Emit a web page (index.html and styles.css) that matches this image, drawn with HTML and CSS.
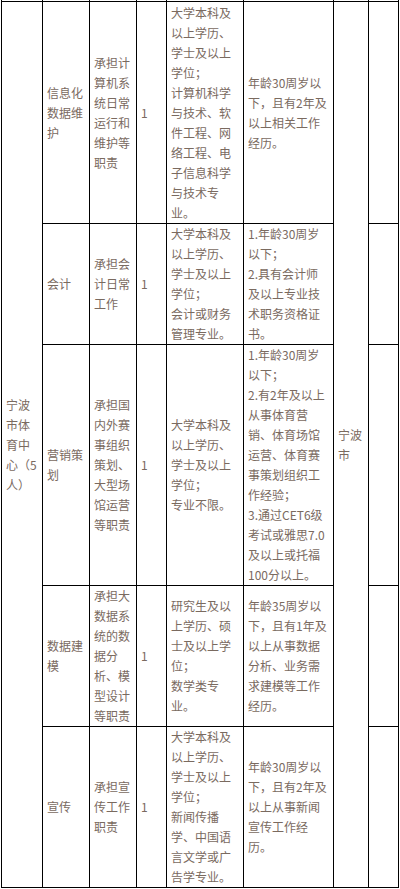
FILE: index.html
```html
<!DOCTYPE html>
<html lang="zh-CN">
<head>
<meta charset="utf-8">
<title>岗位表</title>
<link rel="stylesheet" href="styles.css">
</head>
<body>
<div class="table">
  <div class="cell stub"></div><div class="cell stub"></div><div class="cell stub"></div><div class="cell stub"></div>
  <div class="cell stub"></div><div class="cell stub"></div><div class="cell stub"></div><div class="cell stub"></div>

  <div class="cell unit"><p>宁波市体育中心（5人）</p></div>
  <div class="cell"><p>信息化数据维护</p></div>
  <div class="cell"><p>承担计算机系统日常运行和维护等职责</p></div>
  <div class="cell"><p>1</p></div>
  <div class="cell"><p>大学本科及以上学历、学士及以上学位；<br>计算机科学与技术、软件工程、网络工程、电子信息科学与技术专业。</p></div>
  <div class="cell"><p>年龄30周岁以下，且有2年及以上相关工作经历。</p></div>
  <div class="cell place"><p>宁波市</p></div>
  <div class="cell"></div>

  <div class="cell"><p>会计</p></div>
  <div class="cell"><p>承担会计日常工作</p></div>
  <div class="cell"><p>1</p></div>
  <div class="cell"><p>大学本科及以上学历、学士及以上学位；<br>会计或财务管理专业。</p></div>
  <div class="cell"><p>1.年龄30周岁以下；<br>2.具有会计师及以上专业技术职务资格证书。</p></div>
  <div class="cell"></div>

  <div class="cell"><p>营销策划</p></div>
  <div class="cell"><p>承担国内外赛事组织策划、大型场馆运营等职责</p></div>
  <div class="cell"><p>1</p></div>
  <div class="cell"><p>大学本科及以上学历、学士及以上学位；<br>专业不限。</p></div>
  <div class="cell"><p>1.年龄30周岁以下；<br>2.有2年及以上从事体育营销、体育场馆运营、体育赛事策划组织工作经验；<br>3.通过CET6级考试或雅思7.0及以上或托福100分以上。</p></div>
  <div class="cell"></div>

  <div class="cell"><p>数据建模</p></div>
  <div class="cell"><p>承担大数据系统的数据分析、模型设计等职责</p></div>
  <div class="cell"><p>1</p></div>
  <div class="cell"><p>研究生及以上学历、硕士及以上学位；<br>数学类专业。</p></div>
  <div class="cell"><p>年龄35周岁以下，且有1年及以上从事数据分析、业务需求建模等工作经历。</p></div>
  <div class="cell"></div>

  <div class="cell"><p>宣传</p></div>
  <div class="cell"><p>承担宣传工作职责</p></div>
  <div class="cell"><p>1</p></div>
  <div class="cell"><p>大学本科及以上学历、学士及以上学位；<br>新闻传播学、中国语言文学或广告学专业。</p></div>
  <div class="cell"><p>年龄30周岁以下，且有2年及以上从事新闻宣传工作经历。</p></div>
  <div class="cell"></div>
</div>
</body>
</html>
```

FILE: styles.css
```css
html, body {
  margin: 0;
  padding: 0;
  background: #ffffff;
}

body {
  font-family: "Noto Sans CJK SC", "Noto Sans", sans-serif;
  font-size: 12px;
  line-height: 20px;
  color: #7a6a5f;
}

.table {
  display: grid;
  width: 398px;
  margin-left: 1px;
  box-sizing: border-box;
  border-left: 1px solid #000;
  grid-template-columns: 41px 47px 47px 30px 77px 90px 35px 30px;
  grid-template-rows: 2px 222px 121px 241px 141px 161px;
}

.cell {
  box-sizing: border-box;
  border-right: 1px solid #000;
  border-bottom: 1px solid #000;
  padding: 0 4px;
  display: flex;
  align-items: center;
  min-width: 0;
  overflow: hidden;
}

.cell p {
  margin: 0;
  width: 100%;
}

.stub {
  padding: 0;
}

.unit {
  grid-column: 1;
  grid-row: 2 / span 5;
}

.place {
  grid-column: 7;
  grid-row: 2 / span 5;
}
```
